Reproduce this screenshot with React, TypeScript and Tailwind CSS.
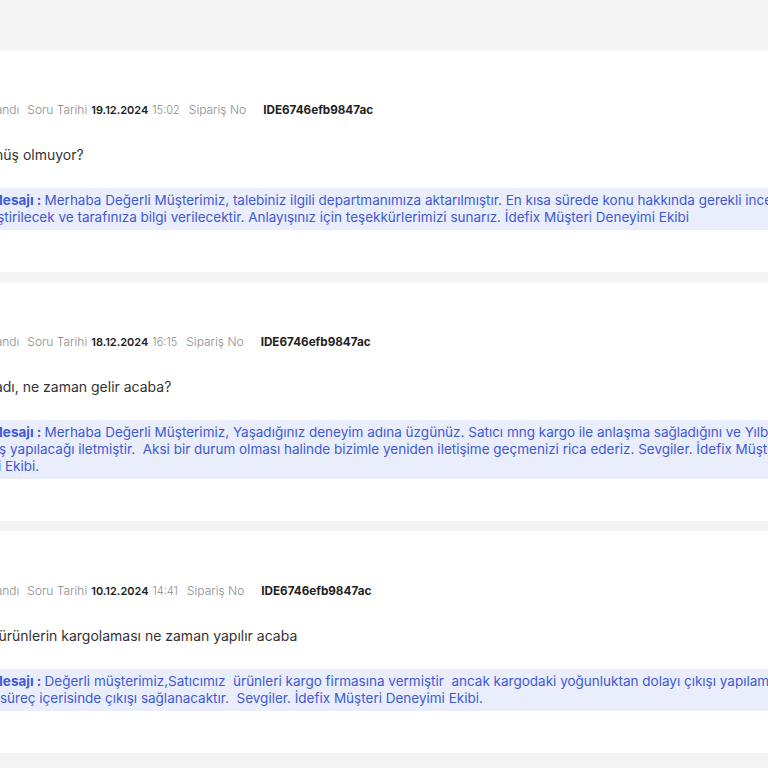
const questions = [
  {
    date: "19.12.2024",
    time: "15:02",
    orderNo: "IDE6746efb9847ac",
    question: "Talebe dönüş olmuyor?",
    answer: [
      "Merhaba Değerli Müşterimiz, talebiniz ilgili departmanımıza aktarılmıştır. En kısa sürede konu hakkında gerekli incelemeler gerçekle",
      "gerçekleştirilecek ve tarafınıza bilgi verilecektir. Anlayışınız için teşekkürlerimizi sunarız. İdefix Müşteri Deneyimi Ekibi",
    ],
  },
  {
    date: "18.12.2024",
    time: "16:15",
    orderNo: "IDE6746efb9847ac",
    question: "Hiç ulaşmadı, ne zaman gelir acaba?",
    answer: [
      "Merhaba Değerli Müşterimiz, Yaşadığınız deneyim adına üzgünüz. Satıcı mng kargo ile anlaşma sağladığını ve Yılbaşından",
      "önce çıkış yapılacağı iletmiştir.  Aksi bir durum olması halinde bizimle yeniden iletişime geçmenizi rica ederiz. Sevgiler. İdefix Müşteri",
      "Deneyimi Ekibi.",
    ],
  },
  {
    date: "10.12.2024",
    time: "14:41",
    orderNo: "IDE6746efb9847ac",
    question: "Diğer tüm ürünlerin kargolaması ne zaman yapılır acaba",
    answer: [
      "Değerli müşterimiz,Satıcımız\u00a0 ürünleri kargo firmasına vermiştir\u00a0 ancak kargodaki yoğunluktan dolayı çıkışı yapılamamıştır.",
      "yakın bir süreç içerisinde çıkışı sağlanacaktır.\u00a0 Sevgiler. İdefix Müşteri Deneyimi Ekibi.",
    ],
  },
]

export default function App() {
  return (
    <div className="h-[768px] w-[768px] overflow-hidden bg-[#f4f4f4] font-['Inter',sans-serif]">
      <div className="-ml-[70px] flex w-[1100px] flex-col gap-[10px] pt-[50px]">
        {questions.map((q, i) => (
          <section key={i} className="bg-white pb-[42px] pt-[52px]">
            <div className="flex h-4 items-center text-[12px] leading-4 text-[#8c8c8c]">
              <span className="mr-[11px] inline-block h-4 w-4 rounded-full bg-[#e9edfc]" />
              <span className="font-light">Cevaplandı</span>
              <span className="ml-2 font-light">Soru Tarihi</span>
              <span className="ml-1 text-[11px] font-semibold text-[#222]">{q.date}</span>
              <span className="ml-1 text-[11px] font-light">{q.time}</span>
              <span className="ml-[9px] font-light">Sipariş No</span>
              <span className="ml-[17px] text-[11.7px] font-bold text-[#222]">{q.orderNo}</span>
            </div>
            <p className="mt-[27px] whitespace-nowrap text-[14px] leading-5 text-[#333]">
              {q.question}
            </p>
            <div className="mt-[23px] bg-[#e9edfc] py-1 pl-[12px] text-[13.5px] leading-[17px] text-[#3f5bd6]">
              {q.answer.map((line, j) => (
                <div key={j} className="whitespace-pre">
                  {j === 0 && <span className="ml-[3px] font-bold">Cevap Mesajı : </span>}
                  {line}
                </div>
              ))}
            </div>
          </section>
        ))}
      </div>
    </div>
  )
}
